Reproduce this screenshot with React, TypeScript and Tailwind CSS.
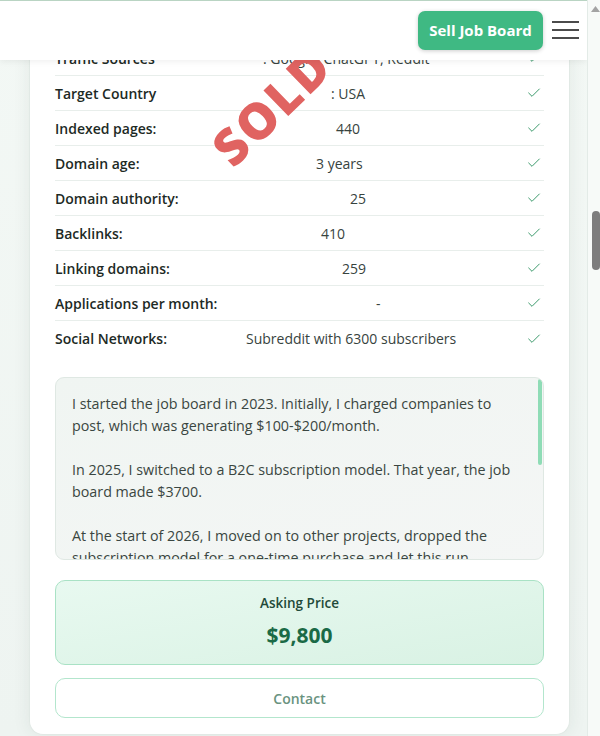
import { Check } from "lucide-react";

type Row = { label: string; value: string; indent: string };

// value indents are measured from the start of the value column
const rows: Row[] = [
  { label: "Traffic Sources", value: ": Google, ChatGPT, Reddit", indent: "pl-[18px]" },
  { label: "Target Country", value: ": USA", indent: "pl-[86px]" },
  { label: "Indexed pages:", value: "440", indent: "pl-[91px]" },
  { label: "Domain age:", value: "3 years", indent: "pl-[71px]" },
  { label: "Domain authority:", value: "25", indent: "pl-[105px]" },
  { label: "Backlinks:", value: "410", indent: "pl-[76px]" },
  { label: "Linking domains:", value: "259", indent: "pl-[97px]" },
  { label: "Applications per month:", value: "-", indent: "pl-[131px]" },
  { label: "Social Networks:", value: "Subreddit with 6300 subscribers", indent: "pl-[1px]" },
];

const story = `I started the job board in 2023. Initially, I charged companies to post, which was generating $100-$200/month.

In 2025, I switched to a B2C subscription model. That year, the job board made $3700.

At the start of 2026, I moved on to other projects, dropped the subscription model for a one-time purchase and let this run
on autopilot.`;

function Header() {
  return (
    <header className="absolute left-0 right-0 top-0 z-20 flex h-[60px] items-center justify-end gap-[9px] border-t border-[#b9d4c3] bg-white pr-[7px] shadow-[0_2px_6px_rgba(0,0,0,0.06)]">
      <button className="h-[39px] w-[125px] rounded-[7px] bg-[#3fb983] text-[15px] font-bold text-white shadow-[0_1px_4px_rgba(0,0,0,0.2)]">
        Sell Job Board
      </button>
      <svg width="28" height="20" viewBox="0 0 28 20" className="mt-[-1px]">
        <path d="M0 2h27M0 10h27M0 18h27" stroke="#111" strokeWidth="1.6" />
      </svg>
    </header>
  );
}

function Scrollbar() {
  return (
    <div className="relative w-[13px] shrink-0 border-l border-[#e3ebe7] bg-[#f7faf8]">
      <svg width="9" height="6" viewBox="0 0 9 6" className="absolute left-[3px] top-[6px]">
        <path d="M4.5 0L9 6H0z" fill="#a3a3a3" />
      </svg>
      <div className="absolute left-[4px] top-[211px] h-[59px] w-[8px] rounded-full bg-[#7d7d7d]" />
    </div>
  );
}

export default function App() {
  return (
    <div
      className="flex h-[736px] w-[600px] overflow-hidden bg-gradient-to-b from-[#f3f8f5] to-[#eef4f1]"
      style={{ fontFamily: '"Open Sans", "Noto Sans", sans-serif' }}
    >
      <div className="relative flex-1 overflow-hidden">
        <Header />
        <main className="pl-[29px] pr-[17px]">
          <div className="relative rounded-b-[14px] border border-t-0 border-[#e1e9e5] bg-white px-[25px] pb-[16px] pt-[41px] shadow-[0_0_18px_rgba(40,70,55,0.08)]">
            <div className="pointer-events-none absolute left-[170px] top-[81px] z-10 -rotate-[44deg] text-[50px] font-extrabold leading-none tracking-[2px] text-[#e06361]">
              SOLD
            </div>

            {rows.map((r, i) => (
              <div
                key={r.label}
                className={`flex h-[35px] items-center ${i < rows.length - 1 ? "border-b border-[#e8eeeb]" : ""}`}
              >
                <div className="w-[190px] shrink-0 text-[14px] font-semibold text-[#1d2a25]">{r.label}</div>
                <div className={`flex-1 text-[14px] text-[#37433e] ${r.indent}`}>{r.value}</div>
                <Check size={16} strokeWidth={1.5} className="mr-[2px] text-[#3c9a6c]" />
              </div>
            ))}

            <div className="relative mt-[21px] h-[183px] overflow-hidden rounded-[9px] border border-[#dfe8e3] bg-gradient-to-br from-[#f0f5f2] to-[#f4f6f5]">
              <p className="whitespace-pre-line px-[16px] pt-[15px] text-[14.3px] leading-[22px] text-[#3a4641]">
                {story}
              </p>
              <div className="absolute right-[1px] top-[1px] h-[86px] w-[4px] rounded-full bg-[#8fdcb6]" />
            </div>

            <div className="mt-[20px] flex h-[85px] flex-col items-center rounded-[10px] border border-[#a9e2c5] bg-gradient-to-br from-[#e8f9f0] to-[#d9f2e4] pt-[12px]">
              <div className="text-[13.5px] font-semibold text-[#1f4a39]">Asking Price</div>
              <div className="mt-[7px] text-[21px] font-bold text-[#1a6a46]">$9,800</div>
            </div>

            <button className="mt-[13px] h-[40px] w-full rounded-[10px] border border-[#b3e6cd] bg-white text-[14px] font-semibold text-[#6a937f]">
              Contact
            </button>
          </div>
        </main>
      </div>
      <Scrollbar />
    </div>
  );
}
